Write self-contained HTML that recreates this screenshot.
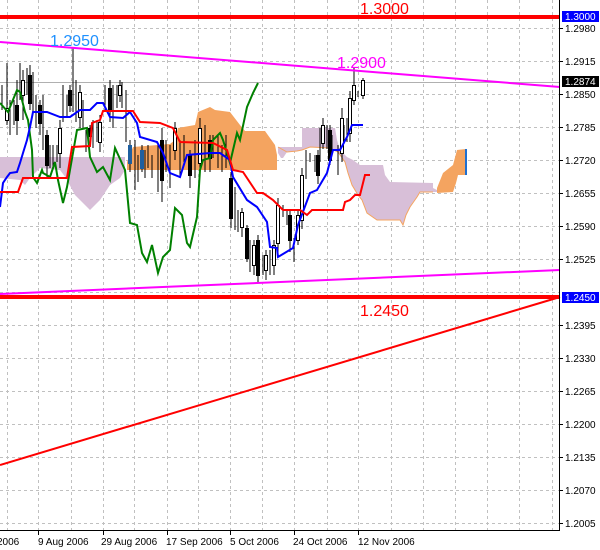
<!DOCTYPE html>
<html><head><meta charset="utf-8"><style>
html,body{margin:0;padding:0;background:#fff;}
svg{display:block;}
text{font-family:"Liberation Sans",sans-serif;}
</style></head><body>
<svg width="600" height="550" viewBox="0 0 600 550" xmlns="http://www.w3.org/2000/svg">
<rect width="600" height="550" fill="#fff"/>
<g stroke="#c0c0c0" stroke-width="1" stroke-dasharray="3,3">
<path d="M7.5 0V530M38.5 0V530M71.5 0V530M103.5 0V530M134.5 0V530M167.5 0V530M198.5 0V530M230.5 0V530M262.5 0V530M294.5 0V530M327.5 0V530M358.5 0V530M391.5 0V530M423.5 0V530M455.5 0V530M487.5 0V530M519.5 0V530M552.5 0V530"/>
<path d="M0 28.5H559M0 61.5H559M0 94.5H559M0 127.5H559M0 160.5H559M0 193.5H559M0 226.5H559M0 259.5H559M0 292.5H559M0 325.5H559M0 358.5H559M0 391.5H559M0 424.5H559M0 457.5H559M0 490.5H559M0 523.5H559"/>
</g>
<polygon fill="#d8bfd8" points="0,157 125,157 125,170 120,178 110,185 100,200 90,210 75,195 66,178 60,170 40,168 30,178 25,185 20,180 0,178"/>
<polygon fill="#f4a460" points="127,162 133,147 170,144 175,140 178,128 195,125 198,112 210,107 215,110 230,112 240,125 245,131 265,131 275,145 277,155 277,170 127,170"/>
<polygon fill="#d8bfd8" points="302,128 335,128 337,140 340,150 347,157 353,160 357,163 360,165 383,165 385,175 390,182 433,183 433,188 437,190 437,192 433,192 420,192 417,197 413,202 410,207 406,215 403,225 400,220 377,220 367,213 362,200 358,195 352,185 348,173 345,162 338,152 330,148 310,147 302,150 297,151 287,152 283,158 281,158 278,153 278,147 302,147"/>
<polyline fill="none" stroke="#f4a460" stroke-width="1" points="278,147 287,152 297,151 302,150 310,147 330,148 338,152 345,162 348,173 352,185 358,195 362,200 367,213 377,220 400,220 403,225 406,215 410,207 417,197 420,192 433,192"/>
<polygon fill="#f4a460" points="437,188 443,173 453,165 457,150 466,149 466,175 458,175 456,183 453,192 437,193"/>
<line x1="466" y1="149" x2="466" y2="175" stroke="#1e6fd0" stroke-width="2"/>
<line x1="0" y1="82.5" x2="559" y2="82.5" stroke="#b0b0b0" stroke-width="1"/>
<g stroke="#000" stroke-width="1">
<path d="M2 85V110M7 63V125M10 100V135M14 100V125M17 80V135M20 63V100M23 70V120M27 68V95M30 65V110M33 72V112M36 95V128M40 100V135M43 95V150M47 130V178M50 145V168M53 145V168M57 145V162M60 120V168M63 85V122M67 95V118M70 85V112M73 47V112M76 80V122M80 85V128M83 100V128M86 130V152M90 125V142M93 120V148M97 120V142M100 115V152M105 85V112M110 80V122M113 85V128M117 85V108M120 80V102M122 82V108M126 90V142M130 140V172M135 140V190M138 155V182M142 145V172M145 150V178M148 145V168M152 155V178M158 145V192M162 128V202M166 140V172M170 145V188M175 122V160M180 140V178M184 135V162M190 150V188M195 140V178M200 118V172M205 125V172M210 135V172M213 135V158M218 135V168M222 145V172M226 135V168M231 172V228M235 187V230M238 210V232M242 208V237M247 225V262M250 240V272M254 240V275M258 235V282M263 255V275M266 250V280M270 250V275M274 240V275M278 198V255M283 205V217M287 210V225M290 210V252M294 238V262M298 210V245M302 168V229M306 150V179M310 153V162M315 155V172M318 150V184M320 128V162M323 118V149M327 125V149M330 125V165M332 135V152M338 145V175M342 108V162M344 125V144M347 118V142M350 91V142M354 68V105M358 91V97M363 78V99"/>
</g>
<g stroke="#000" stroke-width="1">
<rect x="5.5" y="108.5" width="3" height="12" fill="#fff"/>
<rect x="15.5" y="105.5" width="3" height="15" fill="#000"/>
<rect x="21.5" y="80.5" width="3" height="15" fill="#fff"/>
<rect x="28.5" y="75.5" width="3" height="28" fill="#000"/>
<rect x="38.5" y="105.5" width="3" height="18" fill="#000"/>
<rect x="45.5" y="135.5" width="3" height="30" fill="#000"/>
<rect x="58.5" y="128.5" width="3" height="25" fill="#fff"/>
<rect x="68.5" y="90.5" width="3" height="15" fill="#000"/>
<rect x="78.5" y="92.5" width="3" height="25" fill="#fff"/>
<rect x="88.5" y="128.5" width="3" height="8" fill="#000"/>
<rect x="98.5" y="122.5" width="3" height="20" fill="#fff"/>
<rect x="108.5" y="88.5" width="3" height="22" fill="#000"/>
<rect x="118.5" y="85.5" width="3" height="10" fill="#fff"/>
<rect x="128.5" y="145.5" width="3" height="18" fill="#1e5fa0" stroke="#1e5fa0"/>
<rect x="140.5" y="150.5" width="3" height="18" fill="#1e5fa0" stroke="#1e5fa0"/>
<rect x="160.5" y="140.5" width="3" height="40" fill="#000"/>
<rect x="173.5" y="128.5" width="3" height="22" fill="#fff"/>
<rect x="188.5" y="155.5" width="3" height="20" fill="#000"/>
<rect x="198.5" y="128.5" width="3" height="35" fill="#fff"/>
<rect x="208.5" y="140.5" width="3" height="18" fill="#000"/>
<rect x="229.5" y="178.5" width="3" height="40" fill="#000"/>
<rect x="240.5" y="212.5" width="3" height="15" fill="#fff"/>
<rect x="245.5" y="228.5" width="3" height="30" fill="#000"/>
<rect x="252.5" y="245.5" width="3" height="20" fill="#fff"/>
<rect x="256.5" y="240.5" width="3" height="35" fill="#000"/>
<rect x="264.5" y="255.5" width="3" height="15" fill="#fff"/>
<rect x="272.5" y="245.5" width="3" height="20" fill="#fff"/>
<rect x="276.5" y="205.5" width="3" height="38" fill="#fff"/>
<rect x="288.5" y="215.5" width="3" height="25" fill="#000"/>
<rect x="296.5" y="215.5" width="3" height="25" fill="#fff"/>
<rect x="300.5" y="175.5" width="3" height="45" fill="#fff"/>
<rect x="316.5" y="155.5" width="3" height="20" fill="#000"/>
<rect x="321.5" y="125.5" width="3" height="18" fill="#fff"/>
<rect x="328.5" y="130.5" width="3" height="30" fill="#000"/>
<rect x="340.5" y="118.5" width="3" height="35" fill="#fff"/>
<rect x="348.5" y="98.5" width="3" height="35" fill="#fff"/>
<rect x="352.5" y="85.5" width="3" height="15" fill="#fff"/>
<rect x="361.5" y="80.5" width="3" height="15" fill="#fff"/>
</g>
<polyline fill="none" stroke="#008000" stroke-width="2" points="0,103 8,112 17,90 20,92 25,112 28,120 32,150 33,177 37,183 42,170 43,173 50,177 55,162 58,180 63,203 67,187 77,130 87,128 90,157 97,172 103,167 110,180 115,148 125,170 130,223 137,225 142,253 147,262 152,245 158,273 163,257 170,250 175,208 182,215 187,243 190,247 197,217 200,170 203,160 210,158 213,140 220,133 223,140 230,163 237,133 240,140 247,107 253,93 258,83"/>
<polyline fill="none" stroke="#0000ff" stroke-width="2" points="0,207 3,183 7,177 10,173 17,172 20,163 23,153 27,140 30,127 33,112 47,112 60,117 70,117 80,110 90,110 97,103 103,103 110,117 123,118 130,112 137,123 140,137 157,142 163,153 170,173 180,177 187,155 210,153 220,153 230,160 233,177 247,200 257,207 267,222 270,247 277,248 278,257 293,248 298,225 310,193 317,190 327,173 333,150 340,150 347,137 352,125 355,125 363,125"/>
<polyline fill="none" stroke="#ff0000" stroke-width="2" points="0,192 18,192 23,178 67,178 72,147 90,146 92,123 100,120 103,111 133,111 140,122 160,123 173,128 180,142 213,143 227,150 233,170 243,172 257,193 263,193 273,200 283,210 300,210 307,215 312,210 343,210 345,202 350,200 355,195 360,195 365,175 370,175"/>
<line x1="0" y1="42" x2="560" y2="87" stroke="#ff00ff" stroke-width="2"/>
<line x1="0" y1="294" x2="560" y2="270" stroke="#ff00ff" stroke-width="2"/>
<line x1="0" y1="465" x2="560" y2="297" stroke="#ff0000" stroke-width="2"/>
<rect x="0" y="15" width="560" height="4" fill="#ff0000"/>
<rect x="0" y="295" width="560" height="4" fill="#ff0000"/>
<text x="360" y="14" font-size="16" fill="#ff0000">1.3000</text>
<text x="50" y="46" font-size="16" fill="#1e90ff">1.2950</text>
<text x="337" y="68" font-size="16" fill="#ff00ff">1.2900</text>
<text x="360" y="316" font-size="16" fill="#ff0000">1.2450</text>
<line x1="559.5" y1="0" x2="559.5" y2="531" stroke="#000"/>
<line x1="0" y1="530.5" x2="560" y2="530.5" stroke="#000"/>
<g stroke="#000"><path d="M560 28.5h3M560 61.5h3M560 94.5h3M560 127.5h3M560 160.5h3M560 193.5h3M560 226.5h3M560 259.5h3M560 325.5h3M560 358.5h3M560 391.5h3M560 424.5h3M560 457.5h3M560 490.5h3M560 523.5h3"/>
<path d="M38.5 531v4M103.5 531v4M167.5 531v4M230.5 531v4M294.5 531v4M358.5 531v4"/></g>
<g font-size="10" fill="#000">
<text x="565" y="32">1.2980</text><text x="565" y="65">1.2915</text><text x="565" y="98">1.2850</text>
<text x="565" y="131">1.2785</text><text x="565" y="164">1.2720</text><text x="565" y="197">1.2655</text>
<text x="565" y="230">1.2590</text><text x="565" y="263">1.2525</text><text x="565" y="329">1.2395</text>
<text x="565" y="362">1.2330</text><text x="565" y="395">1.2265</text><text x="565" y="428">1.2200</text>
<text x="565" y="461">1.2135</text><text x="565" y="494">1.2070</text><text x="565" y="527">1.2005</text>
</g>
<rect x="562" y="11" width="37" height="11" fill="#0000ff"/>
<text x="565" y="20" font-size="10" fill="#fff">1.3000</text>
<rect x="562" y="76" width="37" height="11" fill="#000"/>
<text x="565" y="85" font-size="10" fill="#fff">1.2874</text>
<rect x="562" y="292" width="37" height="11" fill="#0000ff"/>
<text x="565" y="301" font-size="10" fill="#fff">1.2450</text>
<g font-size="10" fill="#000">
<text x="-3" y="545">2006</text>
<text x="38" y="545">9 Aug 2006</text>
<text x="101" y="545">29 Aug 2006</text>
<text x="166" y="545">17 Sep 2006</text>
<text x="230" y="545">5 Oct 2006</text>
<text x="293" y="545">24 Oct 2006</text>
<text x="358" y="545">12 Nov 2006</text>
</g>
</svg>
</body></html>
